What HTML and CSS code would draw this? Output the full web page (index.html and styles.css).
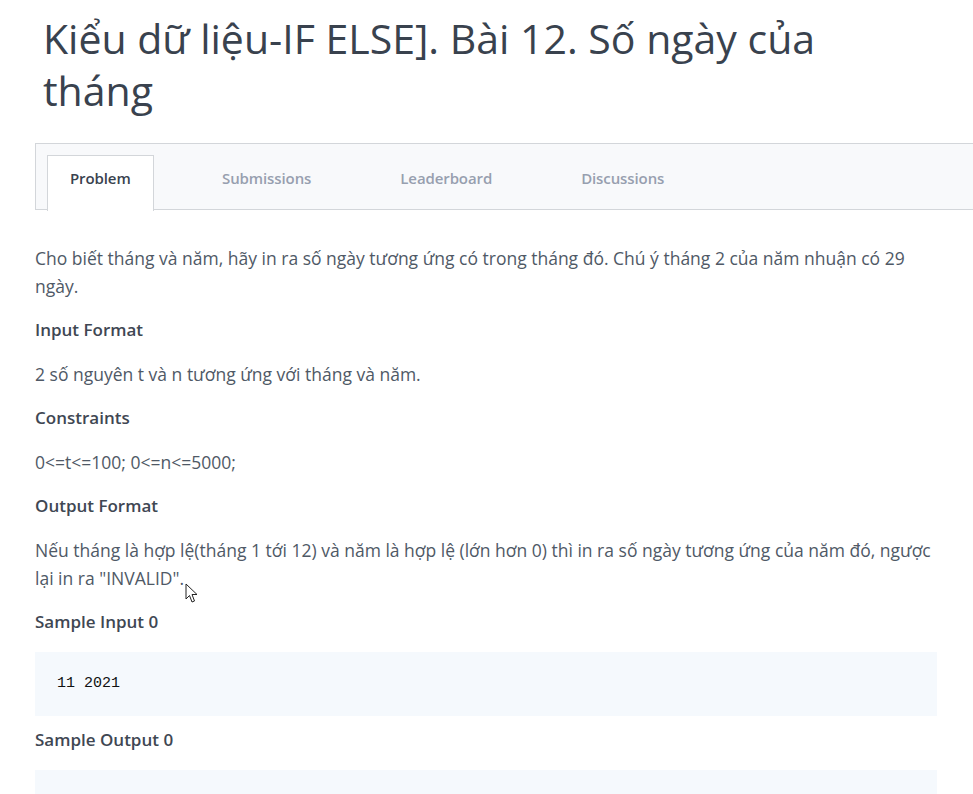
FILE: index.html
```html
<!DOCTYPE html>
<html lang="vi">
<head>
<meta charset="utf-8">
<link rel="stylesheet" href="styles.css">
</head>
<body>
<div class="page">
  <h1 class="title">Kiểu dữ liệu-IF ELSE]. Bài 12. Số ngày của tháng</h1>
  <nav class="tabs">
    <span class="tab active">Problem</span>
    <span class="tab">Submissions</span>
    <span class="tab">Leaderboard</span>
    <span class="tab">Discussions</span>
  </nav>
  <div class="content">
    <p>Cho biết tháng và năm, hãy in ra số ngày tương ứng có trong tháng đó. Chú ý tháng 2 của năm nhuận có 29 ngày.</p>
    <h3>Input Format</h3>
    <p>2 số nguyên t và n tương ứng với tháng và năm.</p>
    <h3>Constraints</h3>
    <p>0&lt;=t&lt;=100; 0&lt;=n&lt;=5000;</p>
    <h3>Output Format</h3>
    <p>Nếu tháng là hợp lệ(tháng 1 tới 12) và năm là hợp lệ (lớn hơn 0) thì in ra số ngày tương ứng của năm đó, ngược lại in ra "INVALID".</p>
    <h3>Sample Input 0</h3>
    <pre class="code">11 2021</pre>
    <h3 class="after-code">Sample Output 0</h3>
    <pre class="code"></pre>
  </div>
</div>
<svg class="cursor" width="14" height="22" viewBox="0 0 14 22"><path d="M1 1 L1 16 L4.5 12.5 L7 19 L9.5 18 L7 11.5 L12 11.5 Z" fill="#fff" stroke="#222" stroke-width="1" stroke-linejoin="round"/></svg>
</body>
</html>
```
FILE: styles.css
```css
html, body {
  margin: 0;
  padding: 0;
  background: #fff;
  overflow: hidden;
}
body {
  font-family: "Open Sans", "Noto Sans", sans-serif;
  color: #39424e;
  width: 973px;
  height: 794px;
  position: relative;
}
.page {
  padding-left: 35px;
}
.title {
  font-size: 41px;
  font-weight: 400;
  line-height: 52px;
  margin: 12px 0 0 8px;
  padding: 0;
  width: 820px;
  color: #39424e;
}
.tabs {
  margin-top: 27px;
  height: 67px;
  box-sizing: border-box;
  border: 1px solid #d3d6da;
  border-right: none;
  background: #f8f9fb;
  padding: 11px 0 0 11px;
  display: flex;
  gap: 43px;
  align-items: flex-start;
}
.tab {
  font-size: 15px;
  font-weight: 600;
  color: #979faf;
  padding: 0 22px;
  height: 56px;
  line-height: 44px;
  box-sizing: border-box;
  border: 1px solid transparent;
  border-bottom: none;
  letter-spacing: -0.1px;
}
.tab.active {
  background: #fff;
  color: #39424e;
  border-color: #d3d6da;
  width: 107px;
  margin-right: 2px;
}
.content {
  padding-top: 34px;
  width: 902px;
}
.content p {
  font-size: 17.5px;
  line-height: 28px;
  margin: 0 0 16px 0;
  color: #4f5966;
}
.content h3 {
  font-size: 17px;
  font-weight: 600;
  line-height: 28px;
  margin: 0 0 16px 0;
  color: #3f4753;
}
.code {
  background: #f5f9fd;
  margin: 0 0 10px 0;
  height: 64px;
  box-sizing: border-box;
  padding: 0 22px;
  font-family: "Liberation Mono", "DejaVu Sans Mono", monospace;
  font-size: 15px;
  line-height: 64px;
  color: #111;
}
.content h3.after-code {
  margin-bottom: 16px;
}
.cursor {
  position: absolute;
  left: 185px;
  top: 583px;
}
```
